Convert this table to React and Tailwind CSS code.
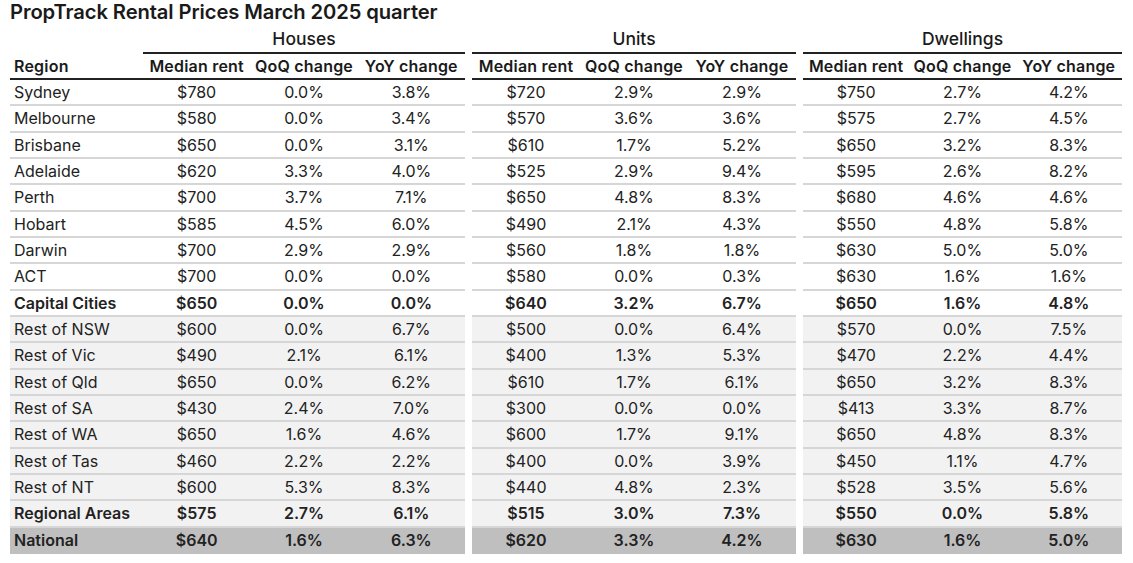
import React from 'react';

const rows = [
  { region: 'Sydney', h: ['$780', '0.0%', '3.8%'], u: ['$720', '2.9%', '2.9%'], d: ['$750', '2.7%', '4.2%'] },
  { region: 'Melbourne', h: ['$580', '0.0%', '3.4%'], u: ['$570', '3.6%', '3.6%'], d: ['$575', '2.7%', '4.5%'] },
  { region: 'Brisbane', h: ['$650', '0.0%', '3.1%'], u: ['$610', '1.7%', '5.2%'], d: ['$650', '3.2%', '8.3%'] },
  { region: 'Adelaide', h: ['$620', '3.3%', '4.0%'], u: ['$525', '2.9%', '9.4%'], d: ['$595', '2.6%', '8.2%'] },
  { region: 'Perth', h: ['$700', '3.7%', '7.1%'], u: ['$650', '4.8%', '8.3%'], d: ['$680', '4.6%', '4.6%'] },
  { region: 'Hobart', h: ['$585', '4.5%', '6.0%'], u: ['$490', '2.1%', '4.3%'], d: ['$550', '4.8%', '5.8%'] },
  { region: 'Darwin', h: ['$700', '2.9%', '2.9%'], u: ['$560', '1.8%', '1.8%'], d: ['$630', '5.0%', '5.0%'] },
  { region: 'ACT', h: ['$700', '0.0%', '0.0%'], u: ['$580', '0.0%', '0.3%'], d: ['$630', '1.6%', '1.6%'] },
  { region: 'Capital Cities', h: ['$650', '0.0%', '0.0%'], u: ['$640', '3.2%', '6.7%'], d: ['$650', '1.6%', '4.8%'], kind: 'total' },
  { region: 'Rest of NSW', h: ['$600', '0.0%', '6.7%'], u: ['$500', '0.0%', '6.4%'], d: ['$570', '0.0%', '7.5%'], kind: 'rest' },
  { region: 'Rest of Vic', h: ['$490', '2.1%', '6.1%'], u: ['$400', '1.3%', '5.3%'], d: ['$470', '2.2%', '4.4%'], kind: 'rest' },
  { region: 'Rest of Qld', h: ['$650', '0.0%', '6.2%'], u: ['$610', '1.7%', '6.1%'], d: ['$650', '3.2%', '8.3%'], kind: 'rest' },
  { region: 'Rest of SA', h: ['$430', '2.4%', '7.0%'], u: ['$300', '0.0%', '0.0%'], d: ['$413', '3.3%', '8.7%'], kind: 'rest' },
  { region: 'Rest of WA', h: ['$650', '1.6%', '4.6%'], u: ['$600', '1.7%', '9.1%'], d: ['$650', '4.8%', '8.3%'], kind: 'rest' },
  { region: 'Rest of Tas', h: ['$460', '2.2%', '2.2%'], u: ['$400', '0.0%', '3.9%'], d: ['$450', '1.1%', '4.7%'], kind: 'rest' },
  { region: 'Rest of NT', h: ['$600', '5.3%', '8.3%'], u: ['$440', '4.8%', '2.3%'], d: ['$528', '3.5%', '5.6%'], kind: 'rest' },
  { region: 'Regional Areas', h: ['$575', '2.7%', '6.1%'], u: ['$515', '3.0%', '7.3%'], d: ['$550', '0.0%', '5.8%'], kind: 'regional' },
  { region: 'National', h: ['$640', '1.6%', '6.3%'], u: ['$620', '3.3%', '4.2%'], d: ['$630', '1.6%', '5.0%'], kind: 'national' },
];

const rowStyle = {
  total: 'bg-white font-semibold border-[#d6d6d6]',
  rest: 'bg-[#f2f2f2] border-[#d6d6d6]',
  regional: 'bg-[#f2f2f2] font-semibold border-[#d6d6d6]',
  national: 'bg-[#bfbfbf] font-semibold border-transparent',
};

const Cells = ({ values }) => (
  <>
    {values.map((v, i) => (
      <div key={i} className="flex-1 text-center">{v}</div>
    ))}
  </>
);

const ColHeads = () => (
  <>
    <div className="flex-1 text-center">Median rent</div>
    <div className="flex-1 text-center">QoQ change</div>
    <div className="flex-1 text-center">YoY change</div>
  </>
);

export default function App() {
  return (
    <div className="w-[1133px] h-[563px] bg-white text-[#1a1a1a] font-['Inter',sans-serif] pl-[10px]">
      <div className="h-[26px] text-[20.2px] font-semibold leading-[24px] tracking-[-0.1px]">
        PropTrack Rental Prices March 2025 quarter
      </div>

      {/* Group headers */}
      <div className="flex h-[28px] text-[17.5px] font-medium">
        <div className="w-[133px]" />
        <div className="w-[322px] flex items-center justify-center border-b-2 border-[#222]">Houses</div>
        <div className="w-[7px]" />
        <div className="w-[324px] flex items-center justify-center border-b-2 border-[#222]">Units</div>
        <div className="w-[7px]" />
        <div className="w-[319px] flex items-center justify-center border-b-2 border-[#222]">Dwellings</div>
      </div>

      {/* Column headers */}
      <div className="flex h-[26px] text-[16px] font-semibold tracking-[0.2px]">
        <div className="w-[455px] flex items-center border-b-2 border-[#222]">
          <div className="w-[133px] pl-[4px]">Region</div>
          <ColHeads />
        </div>
        <div className="w-[7px]" />
        <div className="w-[324px] flex items-center border-b-2 border-[#222]">
          <ColHeads />
        </div>
        <div className="w-[7px]" />
        <div className="w-[319px] flex items-center border-b-2 border-[#222]">
          <ColHeads />
        </div>
      </div>

      {/* Data rows */}
      {rows.map((r) => {
        const cls = rowStyle[r.kind] || 'bg-white border-[#d6d6d6]';
        return (
          <div key={r.region} className="flex h-[26.33px] text-[16px] leading-none text-[#222]">
            <div className={`w-[455px] flex items-center border-b-2 ${cls}`}>
              <div className="w-[133px] pl-[4px]">{r.region}</div>
              <Cells values={r.h} />
            </div>
            <div className="w-[7px]" />
            <div className={`w-[324px] flex items-center border-b-2 ${cls}`}>
              <Cells values={r.u} />
            </div>
            <div className="w-[7px]" />
            <div className={`w-[319px] flex items-center border-b-2 ${cls}`}>
              <Cells values={r.d} />
            </div>
          </div>
        );
      })}
    </div>
  );
}
